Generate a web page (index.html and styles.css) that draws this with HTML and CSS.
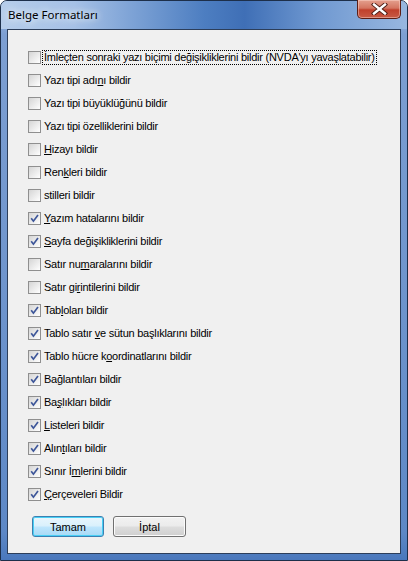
FILE: index.html
```html
<!DOCTYPE html>
<html>
<head>
<meta charset="utf-8">
<link rel="stylesheet" href="styles.css">
</head>
<body>
<div class="window">
  <div class="titlebar">
    <span class="title">Belge Formatları</span>
    <div class="close">
      <svg width="17" height="12" viewBox="0 0 17 12"><path d="M3 1.5 L14 10.5 M14 1.5 L3 10.5" stroke="#4a1a12" stroke-width="4.2" stroke-linecap="square"/><path d="M3 1.5 L14 10.5 M14 1.5 L3 10.5" stroke="#ffffff" stroke-width="2.4" stroke-linecap="square"/></svg>
    </div>
  </div>
  <div class="client">
    <ul class="options">
      <li class="row"><span class="box"></span><span class="label focus">İmleçten sonraki yazı biçimi değişikliklerini bildir (NVDA'yı yavaşlatabilir)</span></li>
      <li class="row"><span class="box"></span><span class="label">Yazı tipi adı<u>n</u>ı bildir</span></li>
      <li class="row"><span class="box"></span><span class="label">Yazı tipi büyüklüğünü bildir</span></li>
      <li class="row"><span class="box"></span><span class="label">Yazı tipi özelliklerini bildir</span></li>
      <li class="row"><span class="box"></span><span class="label"><u>H</u>izayı bildir</span></li>
      <li class="row"><span class="box"></span><span class="label">Ren<u>k</u>leri bildir</span></li>
      <li class="row"><span class="box"></span><span class="label">stilleri bildir</span></li>
      <li class="row"><span class="box checked"></span><span class="label"><u>Y</u>azım hatalarını bildir</span></li>
      <li class="row"><span class="box checked"></span><span class="label"><u>S</u>ayfa değişikliklerini bildir</span></li>
      <li class="row"><span class="box"></span><span class="label">Satır nu<u>m</u>aralarını bildir</span></li>
      <li class="row"><span class="box"></span><span class="label">Satır gi<u>r</u>intilerini bildir</span></li>
      <li class="row"><span class="box checked"></span><span class="label">Tab<u>l</u>oları bildir</span></li>
      <li class="row"><span class="box checked"></span><span class="label">Tablo satır <u>v</u>e sütun başlıklarını bildir</span></li>
      <li class="row"><span class="box checked"></span><span class="label">Tablo hücre k<u>o</u>ordinatlarını bildir</span></li>
      <li class="row"><span class="box checked"></span><span class="label">Ba<u>ğ</u>lantıları bildir</span></li>
      <li class="row"><span class="box checked"></span><span class="label">Ba<u>ş</u>lıkları bildir</span></li>
      <li class="row"><span class="box checked"></span><span class="label"><u>L</u>isteleri bildir</span></li>
      <li class="row"><span class="box checked"></span><span class="label">Alın<u>t</u>ıları bildir</span></li>
      <li class="row"><span class="box checked"></span><span class="label">Sınır İ<u>m</u>lerini bildir</span></li>
      <li class="row"><span class="box checked"></span><span class="label"><u>Ç</u>erçeveleri Bildir</span></li>
    </ul>
    <div class="buttons">
      <button class="btn default">Tamam</button>
      <button class="btn">İptal</button>
    </div>
  </div>
</div>
</body>
</html>
```

FILE: styles.css
```css
html, body {
  margin: 0;
  padding: 0;
  background: #ffffff;
}
.window {
  width: 408px;
  height: 561px;
  box-sizing: border-box;
  border: 1px solid #1d2f4a;
  border-radius: 7px 7px 0 0;
  background: linear-gradient(to bottom, #a7c1e4 0%, #7d9fd2 6%, #6f95cd 50%, #5d88c6 95%, #4a78bc 100%);
  display: flex;
  flex-direction: column;
  padding: 0 6px 6px 6px;
  font-family: "Liberation Sans", Arial, sans-serif;
}
.titlebar {
  height: 28px;
  margin: 0 -6px;
  padding: 0 7px 0 7px;
  display: flex;
  align-items: flex-start;
  justify-content: space-between;
  background: linear-gradient(to right, #b6cdea 0%, #a6c1e6 18%, #7ea3d6 32%, #4d7ec1 50%, #3f6fb6 60%, #7099d1 78%, #98b7e0 100%);
  border-radius: 6px 6px 0 0;
}
.title {
  font-family: "Noto Sans", "Open Sans", sans-serif;
  font-size: 11.5px;
  color: #000;
  line-height: 14px;
  margin-top: 7px;
  text-shadow: 0 0 6px #e8f0fb, 0 0 10px #e8f0fb;
}
.close {
  width: 44px;
  height: 19px;
  margin-right: -1px;
  margin-top: -1px;
  box-sizing: border-box;
  border: 1px solid #5b1e16;
  border-top: none;
  border-radius: 0 0 5px 5px;
  background: linear-gradient(to bottom, #e4a08e 0%, #d47561 45%, #c0402c 55%, #c75a45 100%);
  box-shadow: inset 0 0 0 1px rgba(255,220,210,0.45);
  display: flex;
  align-items: center;
  justify-content: center;
}
.client {
  flex: 1;
  background: #f0f0f0;
  border: 1px solid #2c3e5a;
  display: flex;
  flex-direction: column;
  padding: 21px 0 0 20px;
}
.options {
  list-style: none;
  margin: 0;
  padding: 0;
  display: flex;
  flex-direction: column;
  gap: 10px;
}
.row {
  display: flex;
  align-items: center;
  height: 13px;
  gap: 2px;
  font-size: 11px;
  letter-spacing: -0.25px;
  color: #000;
}
.box {
  width: 13px;
  height: 13px;
  box-sizing: border-box;
  border: 1px solid #8f8f8f;
  background: linear-gradient(135deg, #d5d5d5 0%, #f2f2f2 70%, #ffffff 100%);
  position: relative;
  flex: none;
}
.box.checked::after {
  content: "";
  position: absolute;
  left: 1px;
  top: 1px;
  width: 9px;
  height: 9px;
  background: url("data:image/svg+xml;utf8,<svg xmlns='http://www.w3.org/2000/svg' width='9' height='9' viewBox='0 0 9 9'><path d='M1.2 4.3 L3.4 7.2 L8 1' fill='none' stroke='%233d5699' stroke-width='1.7'/></svg>") no-repeat;
}
.label {
  line-height: 13px;
  padding: 0 1px;
  white-space: nowrap;
}
.label.focus {
  outline: 1px dotted #000;
  outline-offset: 0;
}
u {
  text-decoration: underline;
  text-underline-offset: 1px;
}
.buttons {
  display: flex;
  gap: 9px;
  margin-top: 15px;
  margin-left: 4px;
}
.btn {
  width: 73px;
  height: 21px;
  box-sizing: border-box;
  border: 1px solid #707070;
  border-radius: 3px;
  background: linear-gradient(to bottom, #f2f2f2 0%, #ebebeb 48%, #dddddd 52%, #cfcfcf 100%);
  box-shadow: inset 0 0 0 1px #fbfbfb;
  font-family: "Liberation Sans", Arial, sans-serif;
  font-size: 11px;
  color: #000;
  padding: 0;
}
.btn.default {
  width: 72px;
  border-color: #3c7fb1;
  background: linear-gradient(to bottom, #e9f6fd 0%, #d9f0fc 48%, #bee6fd 52%, #a7d9f5 100%);
  box-shadow: inset 0 0 0 1px #48d0f5;
}
```
